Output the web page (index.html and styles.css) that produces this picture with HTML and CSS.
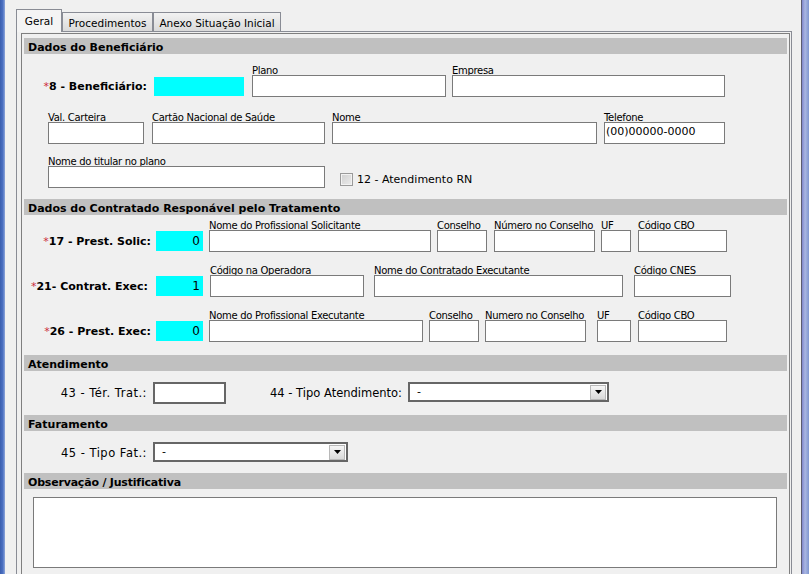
FILE: index.html
```html
<!DOCTYPE html>
<html lang="pt-BR">
<head>
<meta charset="utf-8">
<title>Guia</title>
<link rel="stylesheet" href="styles.css">
</head>
<body>
<div class="window">
  <div class="frame-left"></div>
  <div class="main">
    <div class="tabs">
      <div class="tab tab-active">Geral</div>
      <div class="tab tab-proc">Procedimentos</div>
      <div class="tab tab-anexo">Anexo Situação Inicial</div>
    </div>
    <div class="tabpage">
      <div class="group">
        <div class="section">Dados do Beneficiário</div>

        <div class="row row-benef">
          <div class="req req-center">
            <span class="req-label rl-benef"><span class="ast">*</span>8 - Beneficiário:</span>
            <span class="key key-benef"></span>
          </div>
          <div class="fld f-plano"><span class="lbl">Plano</span><span class="inp"></span></div>
          <div class="fld f-empresa"><span class="lbl">Empresa</span><span class="inp"></span></div>
        </div>

        <div class="row row-cart">
          <div class="fld f-val"><span class="lbl">Val. Carteira</span><span class="inp"></span></div>
          <div class="fld f-cns"><span class="lbl">Cartão Nacional de Saúde</span><span class="inp"></span></div>
          <div class="fld f-nome"><span class="lbl">Nome</span><span class="inp"></span></div>
          <div class="fld f-tel"><span class="lbl">Telefone</span><span class="inp inp-text">(00)00000-0000</span></div>
        </div>

        <div class="row row-tit">
          <div class="fld f-titular"><span class="lbl">Nome do titular no plano</span><span class="inp"></span></div>
          <div class="check"><span class="chk"></span><span class="chk-label">12 - Atendimento RN</span></div>
        </div>

        <div class="section section-2">Dados do Contratado Responável pelo Tratamento</div>

        <div class="row row-sol">
          <div class="req">
            <span class="req-label rl-std"><span class="ast">*</span>17 - Prest. Solic:</span>
            <span class="key key-std">0</span>
          </div>
          <div class="fld f-nps"><span class="lbl">Nome do Profissional Solicitante</span><span class="inp"></span></div>
          <div class="fld f-cons1"><span class="lbl">Conselho</span><span class="inp"></span></div>
          <div class="fld f-num1"><span class="lbl">Número no Conselho</span><span class="inp"></span></div>
          <div class="fld f-uf1"><span class="lbl">UF</span><span class="inp"></span></div>
          <div class="fld f-cbo"><span class="lbl">Código CBO</span><span class="inp"></span></div>
        </div>

        <div class="row row-exe">
          <div class="req">
            <span class="req-label rl-std rl-exe"><span class="ast">*</span>21- Contrat. Exec:</span>
            <span class="key key-std">1</span>
          </div>
          <div class="fld f-cod"><span class="lbl">Código na Operadora</span><span class="inp"></span></div>
          <div class="fld f-nce"><span class="lbl">Nome do Contratado Executante</span><span class="inp"></span></div>
          <div class="fld f-cnes"><span class="lbl">Código CNES</span><span class="inp"></span></div>
        </div>

        <div class="row row-pexe">
          <div class="req">
            <span class="req-label rl-std"><span class="ast">*</span>26 - Prest. Exec:</span>
            <span class="key key-std">0</span>
          </div>
          <div class="fld f-npe"><span class="lbl">Nome do Profissional Executante</span><span class="inp"></span></div>
          <div class="fld f-cons2"><span class="lbl">Conselho</span><span class="inp"></span></div>
          <div class="fld f-num2"><span class="lbl">Numero no Conselho</span><span class="inp"></span></div>
          <div class="fld f-uf2"><span class="lbl">UF</span><span class="inp"></span></div>
          <div class="fld f-cbo"><span class="lbl">Código CBO</span><span class="inp"></span></div>
        </div>

        <div class="section section-3">Atendimento</div>

        <div class="row row-line row-at">
          <span class="plain-label pl-short">43 - Tér. Trat.:</span>
          <span class="inp inp-strong"></span>
          <span class="plain-label pl-44">44 - Tipo Atendimento:</span>
          <div class="select sel-44">
            <span class="sel-text">-</span>
            <span class="sel-btn"><svg width="7" height="4" viewBox="0 0 7 4"><polygon points="0,0 7,0 3.5,4" fill="#000"/></svg></span>
          </div>
        </div>

        <div class="section section-4">Faturamento</div>

        <div class="row row-line row-fat">
          <span class="plain-label pl-short">45 - Tipo Fat.:</span>
          <div class="select sel-45">
            <span class="sel-text">-</span>
            <span class="sel-btn"><svg width="7" height="4" viewBox="0 0 7 4"><polygon points="0,0 7,0 3.5,4" fill="#000"/></svg></span>
          </div>
        </div>

        <div class="section section-5 section-obs">Observação / Justificativa</div>

        <div class="obs"></div>
      </div>
    </div>
  </div>
  <div class="frame-right"></div>
</div>
</body>
</html>
```

FILE: styles.css
```css
* { box-sizing: border-box; }
html, body { margin: 0; padding: 0; }
body {
  width: 809px;
  height: 574px;
  overflow: hidden;
  background: #f0f0f0;
  font-family: "DejaVu Sans", sans-serif;
  color: #000;
}
.window { display: flex; height: 574px; }
.frame-left {
  flex: none;
  width: 5px;
  background: linear-gradient(to right, #3a5eae 0, #4b70c2 55%, #8fa7da 100%);
}
.main { flex: none; width: 796px; padding-left: 11px; }
.frame-right {
  flex: none;
  width: 8px;
  border-left: 1px solid #5a5c70;
  background: linear-gradient(to right, #8088cc 0, #a9b6e2 45%, #7f97d0 100%);
}

/* Tabs */
.tabs { display: flex; align-items: flex-end; height: 31px; }
.tab {
  flex: none;
  font-size: 10.5px;
  line-height: 14px;
  text-align: center;
  white-space: nowrap;
  border: 1px solid #898c95;
  border-bottom: none;
}
.tab-active {
  width: 46px;
  height: 23px;
  margin-bottom: -1px;
  padding-top: 4px;
  background: #f4f4f4;
  position: relative;
  z-index: 1;
}
.tab-proc, .tab-anexo {
  height: 19px;
  padding-top: 3px;
  background: linear-gradient(#f2f2f2, #e6e6e6 50%, #dadada);
}
.tab-proc { width: 91px; }
.tab-anexo { width: 128px; }

.tabpage {
  width: 776px;
  height: 543px;
  border: 1px solid #898c95;
  border-bottom: none;
  padding: 1px 1px 0 4px;
}
.group {
  height: 100%;
  border: 1px solid #7f7f7f;
  border-bottom: none;
  padding: 4px 2px 0 2px;
}

/* Section headers */
.section {
  height: 16px;
  padding: 2px 0 0 4px;
  line-height: 15px;
  background: #c0c0c0;
  font-weight: bold;
  font-size: 11px;
  white-space: nowrap;
}
.section-2 { margin-top: 11px; }
.section-3 { margin-top: 13px; }
.section-4 { margin-top: 11px; }
.section-5 { margin-top: 9px; }
.section-obs { letter-spacing: -0.2px; }

/* Rows */
.row { display: flex; align-items: flex-end; }
.row-benef { margin-top: 11px; }
.row-cart { margin-top: 15px; }
.row-tit { margin-top: 12px; }
.row-sol { margin-top: 5px; }
.row-exe { margin-top: 13px; }
.row-pexe { margin-top: 13px; }
.row-line { align-items: flex-start; }
.row-at { margin-top: 11px; }
.row-fat { margin-top: 11px; }

.fld { flex: none; display: flex; flex-direction: column; }
.lbl {
  display: block;
  height: 10px;
  line-height: 12px;
  font-size: 10px;
  letter-spacing: -0.3px;
  white-space: nowrap;
}
.inp {
  display: block;
  flex: none;
  height: 22px;
  border: 1px solid #7a7a7a;
  background: #fff;
}
.inp-text {
  font-size: 11px;
  line-height: 17px;
  padding-left: 1px;
  white-space: nowrap;
}

/* Required labels with key boxes */
.req { flex: none; display: flex; align-items: center; height: 22px; }
.req-label {
  flex: none;
  font-weight: bold;
  font-size: 11px;
  text-align: right;
  white-space: nowrap;
}
.ast { color: #cc2b3a; font-weight: normal; }
.rl-benef { width: 123px; }
.rl-std { width: 127px; }
.rl-exe { padding-right: 3px; }
.key {
  flex: none;
  background: #00ffff;
  font-size: 12px;
  line-height: 20px;
  text-align: right;
  padding-right: 3px;
}
.key-benef { margin-left: 7px; width: 90px; height: 19px; }
.key-std { margin-left: 5px; width: 47px; height: 20px; }

/* Field placements */
.f-plano { margin-left: 8px; width: 194px; }
.f-empresa { margin-left: 6px; width: 273px; }
.f-val { margin-left: 24px; width: 96px; }
.f-cns { margin-left: 8px; width: 173px; }
.f-nome { margin-left: 7px; width: 265px; }
.f-tel { margin-left: 7px; width: 121px; }
.f-titular { margin-left: 24px; width: 277px; }
.f-nps { margin-left: 6px; width: 222px; }
.f-cons1 { margin-left: 6px; width: 50px; }
.f-num1 { margin-left: 7px; width: 101px; }
.f-uf1 { margin-left: 6px; width: 30px; }
.f-cbo { margin-left: 7px; width: 89px; }
.f-cod { margin-left: 7px; width: 154px; }
.f-nce { margin-left: 10px; width: 249px; }
.f-cnes { margin-left: 11px; width: 97px; }
.f-npe { margin-left: 6px; width: 214px; }
.f-cons2 { margin-left: 6px; width: 50px; }
.f-num2 { margin-left: 6px; width: 101px; }
.f-uf2 { margin-left: 11px; width: 34px; }

/* Checkbox */
.check {
  flex: none;
  display: flex;
  align-items: center;
  margin-left: 15px;
  margin-bottom: 2px;
  height: 13px;
}
.chk {
  flex: none;
  width: 13px;
  height: 13px;
  border: 1px solid #9a9a9a;
  background: linear-gradient(135deg, #cfcfcf, #ececec);
  box-shadow: inset 0 0 0 1px #f2f2f2;
}
.chk-label {
  margin-left: 4px;
  font-size: 11px;
  line-height: 13px;
  white-space: nowrap;
}

/* Plain labels / selects */
.plain-label {
  flex: none;
  font-size: 11.5px;
  line-height: 22px;
  text-align: right;
  white-space: nowrap;
}
.pl-short { width: 123px; letter-spacing: 0.5px; }
.pl-44 { width: 176px; }
.inp-strong {
  margin-left: 6px;
  width: 73px;
  border: 2px solid #666;
}
.select {
  flex: none;
  display: flex;
  align-items: center;
  justify-content: space-between;
  height: 20px;
  margin-left: 6px;
  border: 2px solid #666;
  background: #fff;
}
.sel-44 { width: 201px; }
.sel-45 { width: 195px; }
.sel-text {
  padding-left: 7px;
  font-size: 11px;
  line-height: 16px;
}
.sel-btn {
  flex: none;
  display: flex;
  align-items: center;
  justify-content: center;
  width: 16px;
  height: 15px;
  margin-right: 1px;
  border: 1px solid #b8b8b8;
  background: linear-gradient(#f6f6f6, #d9d9d9);
}

/* Observation area */
.obs {
  margin-top: 8px;
  margin-left: 9px;
  width: 744px;
  height: 71px;
  border: 1px solid #7a7a7a;
  background: #fff;
}
```
